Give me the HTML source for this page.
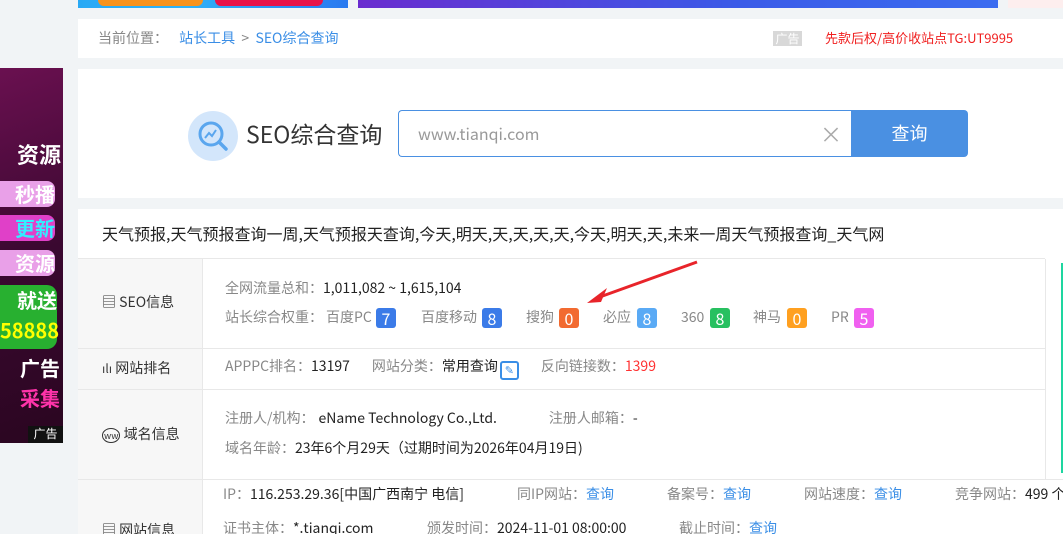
<!DOCTYPE html>
<html><head><meta charset="utf-8"><style>
*{margin:0;padding:0;box-sizing:border-box}
html,body{width:1063px;height:534px;overflow:hidden}
body{background:#f1f4f6;font-family:"Noto Sans CJK SC","Liberation Sans",sans-serif;position:relative;color:#333}
.a{position:absolute;white-space:nowrap;line-height:1.3}
.g{color:#888;font-size:14px}
.d{color:#222;font-size:14px}
.b{position:absolute;top:308px;width:20px;height:20px;border-radius:3px;color:#fff;text-align:center;line-height:20px;font-size:16px}
.lk{color:#3a8ee6}
</style></head><body>
<div class="a" style="left:78px;top:0;width:270px;height:8px;background:linear-gradient(90deg,#29a9f5,#2fb2f8 40%,#2979f0)"></div>
<div class="a" style="left:98px;top:0;width:105px;height:6px;background:#f7931e;border-radius:0 0 8px 8px"></div>
<div class="a" style="left:215px;top:0;width:108px;height:6px;background:#e8134a;border-radius:0 0 8px 8px"></div>
<div class="a" style="left:358px;top:0;width:640px;height:8px;background:linear-gradient(90deg,#6a2ccf,#3a5be8 60%,#3b6cf0)"></div>
<div class="a" style="left:1008px;top:0;width:55px;height:8px;background:#fdeeee"></div>

<div class="a" style="left:0;top:68px;width:63px;height:375px;overflow:hidden;background:linear-gradient(160deg,#6a1050,#3a0830 50%,#2a0620)">
<div class="a" style="right:2px;top:72px;font-size:22px;font-weight:bold;color:#fff">资源</div>
<div class="a" style="left:0;top:113px;width:55px;height:26px;background:#e9a0e8;border-radius:0 8px 8px 0;font-size:20px;font-weight:bold;color:#fff;text-align:right;line-height:26px">秒播</div>
<div class="a" style="left:0;top:147px;width:55px;height:26px;background:#e040c8;border-radius:0 8px 8px 0;font-size:20px;font-weight:bold;color:#3ef;text-align:right;line-height:26px">更新</div>
<div class="a" style="left:0;top:182px;width:55px;height:26px;background:#e9a0e8;border-radius:0 8px 8px 0;font-size:20px;font-weight:bold;color:#fff;text-align:right;line-height:26px">资源</div>
<div class="a" style="left:0;top:217px;width:57px;height:64px;background:#28b030;border-radius:0 10px 10px 0;font-size:20px;font-weight:bold;color:#fff;line-height:30px;text-align:right">就送<br><span style="color:#ff0">58888</span></div>
<div class="a" style="right:3px;top:287px;font-size:20px;font-weight:bold;color:#fff">广告</div>
<div class="a" style="right:3px;top:317px;font-size:20px;font-weight:bold;color:#f3a">采集</div>
<div class="a" style="left:28px;top:358px;width:35px;height:17px;background:#111;color:#fff;font-size:12px;text-align:center">广告</div>
</div>

<div class="a" style="left:78px;top:19px;width:985px;height:39px;background:#fff"></div>
<div class="a" style="left:98px;top:29px;font-size:14px;color:#888">当前位置： <span class="lk" style="margin-left:8px">站长工具</span> <span style="color:#888">&nbsp;&gt;&nbsp;</span> <span class="lk">SEO综合查询</span></div>
<div class="a" style="left:773px;top:31px;width:29px;height:15px;background:#d8d8d8;color:#fff;font-size:12px;text-align:center;line-height:15px">广告</div>
<div class="a" style="left:825px;top:30px;font-size:13px;color:#f02020">先款后权/高价收站点TG:UT9995</div>

<div class="a" style="left:78px;top:69px;width:985px;height:129px;background:#fff"></div>
<div class="a" style="left:188px;top:111px;width:50px;height:50px;border-radius:50%;background:#d3e6fb"></div>
<svg class="a" style="left:196px;top:119px" width="36" height="36" viewBox="0 0 36 36"><circle cx="15" cy="15" r="11" fill="none" stroke="#5aa6ee" stroke-width="3"/><path d="M23 23l7 7" stroke="#5aa6ee" stroke-width="3.5" stroke-linecap="round"/><path d="M9 19l4-5 3 3 4-6" fill="none" stroke="#5aa6ee" stroke-width="2"/></svg>
<div class="a" style="left:246px;top:119px;font-size:23px;color:#333">SEO综合查询</div>
<div class="a" style="left:398px;top:110px;width:454px;height:47px;border:1px solid #4a90e2;border-right:none;border-radius:4px 0 0 4px;background:#fff"></div>
<div class="a" style="left:418px;top:123px;font-size:16px;color:#999">www.tianqi.com</div>
<div class="a" style="left:820px;top:123px;font-size:22px;color:#aaa;line-height:22px">×</div>
<div class="a" style="left:851px;top:110px;width:117px;height:47px;background:#4a90e2;border-radius:0 4px 4px 0;color:#fff;font-size:18px;text-align:center;line-height:47px">查询</div>

<div class="a" style="left:78px;top:209px;width:985px;height:325px;background:#fff"></div>
<div class="a" style="left:102px;top:223px;font-size:16px;color:#222">天气预报,天气预报查询一周,天气预报天查询,今天,明天,天,天,天,天,今天,明天,天,未来一周天气预报查询_天气网</div>
<div class="a" style="left:78px;top:258px;width:967px;height:1px;background:#e8e8e8"></div>
<div class="a" style="left:78px;top:259px;width:125px;height:275px;background:#f7f7f7;border-right:1px solid #e8e8e8"></div>
<div class="a" style="left:78px;top:348px;width:967px;height:1px;background:#e8e8e8"></div>
<div class="a" style="left:78px;top:389px;width:967px;height:1px;background:#e8e8e8"></div>
<div class="a" style="left:78px;top:479px;width:985px;height:1px;background:#e8e8e8"></div>
<div class="a" style="left:1045px;top:259px;width:1px;height:220px;background:#e8e8e8"></div>
<div class="a" style="left:1061px;top:263px;width:2px;height:210px;background:#1ed6a0"></div>

<div class="a" style="left:102px;top:293px;font-size:14px;color:#333">▤ SEO信息</div>
<div class="a" style="left:102px;top:359px;font-size:14px;color:#333"><span style="font-size:12px">ılı</span> 网站排名</div>
<div class="a" style="left:102px;top:425px;font-size:14px;color:#333"><span style="font-size:9px;border:1px solid #333;border-radius:50%;padding:0 1px">ww</span> 域名信息</div>
<div class="a" style="left:102px;top:521px;font-size:14px;color:#333">▤ 网站信息</div>

<div class="a g" style="left:225px;top:279px">全网流量总和：<span class="d">1,011,082 ~ 1,615,104</span></div>
<div class="a g" style="left:225px;top:308px">站长综合权重：</div>
<div class="a g" style="left:326px;top:308px">百度PC</div><div class="b" style="left:376px;background:#3b7be8">7</div>
<div class="a g" style="left:421px;top:308px">百度移动</div><div class="b" style="left:482px;background:#3b7be8">8</div>
<div class="a g" style="left:526px;top:308px">搜狗</div><div class="b" style="left:559px;background:#f26a30">0</div>
<div class="a g" style="left:603px;top:308px">必应</div><div class="b" style="left:637px;background:#5aaaf5">8</div>
<div class="a g" style="left:681px;top:308px">360</div><div class="b" style="left:710px;background:#27c060">8</div>
<div class="a g" style="left:753px;top:308px">神马</div><div class="b" style="left:787px;background:#ffa020">0</div>
<div class="a g" style="left:831px;top:308px">PR</div><div class="b" style="left:854px;background:#f060f0">5</div>
<svg class="a" style="left:585px;top:260px" width="115" height="46"><path d="M112 2L12 38" stroke="#e8242a" stroke-width="3"/><path d="M2 43L22 28L16 42Z" fill="#e8242a"/></svg>

<div class="a g" style="left:225px;top:357px">APPPC排名：<span class="d">13197</span><span style="margin-left:22px">网站分类：</span><span class="d">常用查询</span><span style="display:inline-block;width:19px;height:19px;border:2px solid #3a8ee6;border-radius:3px;vertical-align:-3px;margin-left:2px;color:#3a8ee6;font-size:11px;line-height:15px;text-align:center">✎</span><span style="margin-left:22px">反向链接数：</span><span style="color:#f33">1399</span></div>

<div class="a g" style="left:225px;top:409px">注册人/机构：<span class="d" style="margin-left:4px">eName Technology Co.,Ltd.</span><span style="margin-left:52px">注册人邮箱：</span><span class="d">-</span></div>
<div class="a g" style="left:225px;top:439px">域名年龄：<span class="d">23年6个月29天（过期时间为2026年04月19日)</span></div>

<div class="a g" style="left:223px;top:485px">IP：<span class="d">116.253.29.36[中国广西南宁 电信]</span></div>
<div class="a g" style="left:517px;top:485px">同IP网站：<span class="lk">查询</span></div>
<div class="a g" style="left:667px;top:485px">备案号：<span class="lk">查询</span></div>
<div class="a g" style="left:804px;top:485px">网站速度：<span class="lk">查询</span></div>
<div class="a g" style="left:955px;top:485px">竞争网站：<span class="d">499 个</span></div>
<div class="a g" style="left:223px;top:519px">证书主体：<span class="d">*.tianqi.com</span></div>
<div class="a g" style="left:427px;top:519px">颁发时间：<span class="d">2024-11-01 08:00:00</span></div>
<div class="a g" style="left:679px;top:519px">截止时间：<span class="lk">查询</span></div>
</body></html>
